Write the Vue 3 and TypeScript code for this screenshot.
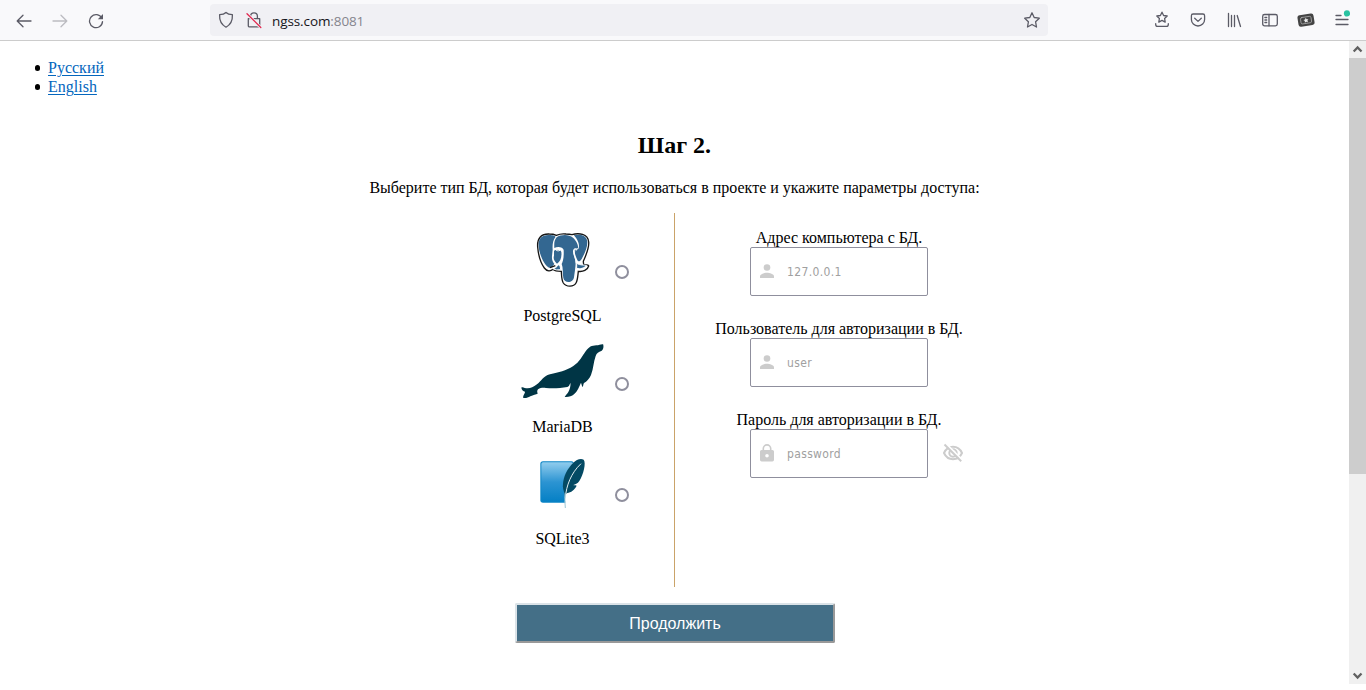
<script setup lang="ts">
import { ref } from 'vue'

interface Field {
  id: string
  label: string
  placeholder: string
  icon: 'user' | 'lock'
}

const fields: Field[] = [
  { id: 'host', label: 'Адрес компьютера с БД.', placeholder: '127.0.0.1', icon: 'user' },
  { id: 'login', label: 'Пользователь для авторизации в БД.', placeholder: 'user', icon: 'user' },
  { id: 'secret', label: 'Пароль для авторизации в БД.', placeholder: 'password', icon: 'lock' },
]
const databases = ['PostgreSQL', 'MariaDB', 'SQLite3']
const selected = ref('')
</script>

<template>
  <div class="window">
    <header class="toolbar">
      <div class="nav">
        <svg width="16" height="16" viewBox="0 0 16 16"><path d="M15 8H1.500M7 2.200 1.200 8 7 13.800" /></svg>
        <svg class="dim" width="16" height="16" viewBox="0 0 16 16"><path d="M1 8h13.500M9 2.200 14.800 8 9 13.800" /></svg>
        <svg width="16" height="16" viewBox="0 0 16 16"><path d="M13.800 5.200A6.500 6.500 0 1 0 14.500 8.600" /><path class="solid" d="M15 1v5.200H9.800z" /></svg>
      </div>
      <div class="address">
        <svg width="16" height="18" viewBox="0 0 16 18"><path d="M8 1.500C6.600 3 4 3.700 1.600 3.700c-.3 5.600 1.300 9.600 6.400 12.500 5.100-2.900 6.700-6.900 6.400-12.500C12 3.700 9.400 3 8 1.500z" /></svg>
        <svg class="insecure" width="16" height="18" viewBox="0 0 16 18"><path d="M4.600 7.500V5.200a3.400 3.400 0 0 1 6.800 0v2.300M2.300 7.700h11.400v7a1.200 1.200 0 0 1-1.200 1.200h-9a1.200 1.200 0 0 1-1.200-1.200z" /><path class="halo" d="M1.300 3.100 15 16.800" /><path class="strike" d="M1 2.700 14.800 16.500" /></svg>
        <span class="url">ngss.com<span>:8081</span></span>
        <svg class="star" width="18" height="18" viewBox="0 0 18 18"><path d="m9 1.800 2.200 4.700 5.100.7-3.700 3.600.9 5.200L9 13.500 4.500 16l.9-5.200-3.700-3.600 5.100-.7z" /></svg>
      </div>
      <div class="actions">
        <svg width="16" height="18" viewBox="0 0 16 18"><path d="m8 1.200 1.600 3.300 3.600.5-2.600 2.500.6 3.600L8 9.400l-3.200 1.700.6-3.600L2.800 5l3.600-.5zM1.700 12.700v.7c0 1.300.6 1.900 1.900 1.900h8.800c1.300 0 1.900-.6 1.900-1.900v-.7" /></svg>
        <svg width="16" height="18" viewBox="0 0 16 18"><path d="M3.100 3h9.800c1 0 1.700.7 1.700 1.700v3.700a6.600 6.600 0 0 1-13.200 0V4.700C1.400 3.700 2.100 3 3.100 3zM4.700 7.300 8 10.400l3.300-3.100" /></svg>
        <svg width="16" height="18" viewBox="0 0 16 18"><path d="M2.500 2.500v13M5.500 4.500v11M8.500 4.500v11M11.200 4.500l3.300 11" /></svg>
        <svg width="18" height="18" viewBox="0 0 18 18"><rect x="1.700" y="3.500" width="14.600" height="11.300" rx="1.800" /><path d="M8 3.500v11.300M3.900 6.500h1.800M3.900 9h1.800M3.900 11.500h1.800" /></svg>
        <svg class="ticket" width="18" height="18" viewBox="0 0 18 18"><g transform="rotate(-9 9 9)"><rect class="solid" x=".9" y="3.400" width="16.200" height="11.500" rx="2.500" /><rect x="3.700" y="5.900" width="10.600" height="6.500" rx="1.500" /><path class="spark" d="m9 6.800.8 1.500 1.700.3-1.200 1.200.3 1.700L9 10.700l-1.600.8.3-1.700-1.200-1.200 1.700-.3z" /></g></svg>
        <svg width="16" height="22" viewBox="0 0 16 22"><path d="M2 6.500h5M2 10.500h12M2 15.500h12" /><circle cx="13" cy="4.400" r="3.100" /></svg>
      </div>
    </header>

    <div class="viewport">
      <main>
        <ul>
          <li><a href="#">Русский</a></li>
          <li><a href="#">English</a></li>
        </ul>
        <h2>Шаг 2.</h2>
        <p>Выберите тип БД, которая будет использоваться в проекте и укажите параметры доступа:</p>

        <div class="columns">
          <section class="databases">
            <label v-for="(name, i) in databases" :key="name" class="database">
              <span class="brand">
                <svg v-if="i === 0" width="85" height="57" viewBox="30 37 255 171">
                  <path d="M83 82C81 55 94 42 118 43q12 0 21 4 14-6 29-4 10 0 18 2c20-6 48-3 50 22 2 18-6 35-16 58 0 5 1 8 1 10 7 0 14-1 15 4-3 12-17 18-31 16-2 17-2 27-7 35-7 13-30 12-38 0-6-10-5-23-6-35-11 0-20-1-25-6-7 6-18 7-26-4-13-18-18-40-20-63z" fill="#fff" stroke="#161616" stroke-width="4" />
                  <path d="M86 82c-2-24 8-37 32-36 12 0 15 3 19 5-9 11-10 24-9 39l-2 19c-1 11 2 18 7 24-5 7-11 15-18 10-15-11-27-42-29-61z" fill="#336791" />
                  <path d="M140 53c12-9 37-10 49 1 13 12 16 24 15 32-9-3-15 1-15 9 0 12 7 20 8 33 0 13-3 30-5 45-2 18-29 19-32 2-3-17 0-31-5-42 4-8 7-19 6-42-2-9-18-12-28-6-1-14 0-24 7-32z" fill="#336791" />
                  <path d="M191 47c22-6 41 1 41 21 0 18-9 35-17 50-5 8-11 9-13 3-4-9-8-17-8-28 0-7 5-8 11-5 6-12-3-31-14-41zM132 93c9-5 20-3 22 4 2 16-3 29-13 35-8-7-12-14-9-24z" fill="#336791" />
                  <path d="M192 92c-2 14 6 22 6 39M138 91q7-3 12 1l-6 2zM194 90l8-1-5 4" fill="none" stroke="#fff" stroke-width="2.500" stroke-linejoin="round" />
                  <path d="M128 147c6 0 11-4 18-12 5 3 5 8 6 15q-14 3-24-3z" fill="#336791" stroke="#fff" stroke-width="3" />
                  <path d="M200 131c11 7 22 4 29 6-6 9-19 12-29 9z" fill="#336791" stroke="#fff" stroke-width="3" />
                  <path d="m120 144 16-6" fill="none" stroke="#161616" stroke-width="3.500" />
                </svg>
                <svg v-else-if="i === 1" width="85" height="57" viewBox="30 26 255 171">
                  <path d="M279 27c-6-1-12 3-20 3-14 1-22 4-32 18-11 15-18 32-37 44-23 15-43 18-70 25-22 6-25 20-39 30-14 11-22 13-37 11-4-2-8-3-10-1 1 7 6 10 11 12 0 6-7 11-5 19 8 1 14-1 21-5 9-4 17-6 22-8-1-5-3-8 1-13 8-5 15-5 24-4 24 2 44 0 64-3 4-1 7-6 9-13 2 9-2 20-6 28-3 5-7 9-11 15 11 1 21-2 28-8 10-9 16-23 21-35l4 13c4-3 2-8 5-12 8-4 17-13 21-24 8-20 7-38 14-57 3-9 9-12 17-15 6-3 8-13 5-21z" fill="#003545" />
                </svg>
                <svg v-else width="85" height="57" viewBox="30 30 255 171">
                  <defs><linearGradient id="sky" x2="0" y2="1"><stop stop-color="#90cced" /><stop offset=".5" stop-color="#2c94d2" /><stop offset="1" stop-color="#0580c5" /></linearGradient></defs>
                  <rect x="91" y="49" width="101" height="124" rx="8" fill="#0b84c5" />
                  <rect x="94" y="52" width="95" height="118" rx="5" fill="url(#sky)" />
                  <path d="M166 174c-3-38-5-53 0-76 7-25 23-51 43-56h31v133z" fill="#fff" />
                  <path d="M221 44c-9-5-22 0-31 9-19 18-30 43-31 64-2 10 2 18 4 28l2 13c2-11 4-13 7-14 11-1 22-10 28-22-5-2-8 0-10-2 5-1 13-4 18-12 12-19 21-54 13-64z" fill="#044a64" />
                  <path d="M213 56c-30 28-44 66-47 102" fill="none" stroke="#e5f0f3" stroke-width="3" />
                  <path d="M166 145q-3 22 0 44" fill="none" stroke="#9ec6d4" stroke-width="3" />
                </svg>
                <span>{{ name }}</span>
              </span>
              <input v-model="selected" type="radio" name="database" :value="name">
            </label>
          </section>

          <section class="fields">
            <div v-for="field in fields" :key="field.id" class="field">
              <label :for="field.id">{{ field.label }}</label>
              <div class="entry">
                <div class="box">
                  <svg v-if="field.icon === 'user'" width="14" height="16" viewBox="0 0 14 16"><circle cx="7" cy="3.500" r="3.300" /><path d="M0 14v-1.700C0 10 4.500 8.800 7 8.800s7 1.200 7 3.500V14z" /></svg>
                  <svg v-else width="14" height="20" viewBox="0 0 14 20"><path fill-rule="evenodd" d="M2.500 6V4.600a4.500 4.500 0 0 1 9 0V6h.9A1.600 1.600 0 0 1 14 7.600v8.200a1.600 1.600 0 0 1-1.600 1.600H1.600A1.600 1.600 0 0 1 0 15.800V7.600A1.600 1.600 0 0 1 1.600 6zm1.600 0h5.800V4.600a2.900 2.900 0 0 0-5.800 0zM7 9.900a1.800 1.800 0 1 0 0 3.600 1.800 1.800 0 0 0 0-3.600z" /></svg>
                  <input :id="field.id" type="text" :placeholder="field.placeholder">
                </div>
                <svg v-if="field.icon === 'lock'" class="eye" width="20" height="20" viewBox="0 0 20 20"><path d="M1 10c2-4.400 5.200-6.200 9-6.200s7 1.800 9 6.200c-2 4.400-5.200 6.200-9 6.200S3 14.400 1 10z" /><circle cx="10" cy="10" r="3.700" /><path class="gap" d="M3.200 1 19 16.800" /><path d="M1.500 1.500 18.200 18.200" /></svg>
              </div>
            </div>
          </section>
        </div>
        <button type="button">Продолжить</button>
      </main>

      <div class="scrollbar">
        <svg width="17" height="17" viewBox="0 0 17 17"><path d="m4.700 10.500 3.900-4 3.900 4" /></svg>
        <div class="thumb"></div>
        <svg width="17" height="17" viewBox="0 0 17 17"><path d="m4.700 6.500 3.900 4 3.900-4" /></svg>
      </div>
    </div>
  </div>
</template>

<style>
body { overflow: hidden; background: #fff; }
</style>

<style scoped>
* { box-sizing: border-box; }
.window { width: 1366px; height: 690px; font: 16px/19px "Liberation Serif", serif; color: #000; }
svg { display: block; flex: none; }
.toolbar { display: flex; height: 41px; background: #f9f9fb; border-bottom: 1px solid #ccc; align-items: center; }
.toolbar svg { fill: none; stroke: #5b5b66; stroke-width: 1.300; stroke-linejoin: round; stroke-linecap: round; }
.toolbar .solid { fill: #5b5b66; stroke: none; }
.toolbar .dim { stroke: #bcbcc1; }
.nav { display: flex; gap: 20px; width: 210px; padding: 1px 0 0 16px; }
.address { display: flex; align-items: center; width: 838px; height: 32px; border-radius: 4px; padding: 0 7px 0 8px; background: #f0f0f4; }
.address .insecure { margin: 0 10px 0 12px; }
.toolbar .halo { stroke: #f0f0f4; stroke-width: 3; }
.toolbar .strike { stroke: #e22850; stroke-width: 1.300; }
.url { flex: 1; font: 13.500px/20px "Open Sans", "Noto Sans", sans-serif; color: #15141a; padding-top: 1px; letter-spacing: -.1px; }
.url span { color: #85858e; }
.actions { display: flex; align-items: center; gap: 20px; margin-left: 106px; }
.actions svg:nth-child(4), .actions svg:nth-child(5) { margin: 0 -1px; }
.toolbar .ticket .solid { fill: #444; }
.toolbar .ticket rect:not(.solid) { stroke: #aaa; stroke-width: .8; }
.toolbar .ticket .spark { fill: #eee; stroke: none; }
.actions circle { fill: #2ac3a2; stroke: none; }
.viewport { display: flex; height: 643px; }
main { width: 1349px; padding-top: 17px; }
ul { margin: 0; padding-left: 48px; list-style: none; }
li { display: flex; align-items: center; height: 19px; margin-left: -13.500px; }
li::before { content: ""; width: 5.500px; height: 5.500px; margin: 1px 8px 0 0; border-radius: 50%; background: #000; }
a { color: #0366bd; text-underline-offset: 2px; }
h2 { margin: 35px 0 0; font-size: 24px; line-height: 28px; text-align: center; }
p { margin: 19px 0 0; text-align: center; }
.columns { display: flex; height: 374px; margin-top: 16px; }
.databases { width: 675px; padding: 19px 45px 0 0; border-right: 1px solid #caa369; }
.database { display: flex; justify-content: flex-end; gap: 10px; height: 111.500px; }
.brand { display: flex; flex-direction: column; align-items: center; width: 85px; gap: 17px; }
.database:nth-child(2) .brand { gap: 16.500px; }
.database input { appearance: none; width: 14px; height: 14px; margin: 33px 0 0; border: 2px solid #8f8f9d; border-radius: 50%; background: #fff; }
.fields { width: 328px; padding-top: 15px; }
.field { height: 91px; text-align: center; }
.field label { display: block; height: 19px; }
.entry { display: flex; align-items: center; gap: 15px; padding-left: 75px; }
.box { display: flex; align-items: center; width: 178px; height: 49px; border: 1px solid #8f8f9d; border-radius: 2px; padding: 0 9px; gap: 13px; }
.box svg { fill: #ccc; }
.box input { min-width: 0; flex: 1; padding: 0; border: 0; outline: 0; font: 12px "DejaVu Sans Condensed", "DejaVu Sans", sans-serif; font-stretch: condensed; letter-spacing: .35px; }
.box input::placeholder { color: #a0a0a0; opacity: 1; }
.eye { margin-top: -2px; fill: none; stroke: #ccc; stroke-width: 2; }
.eye .gap { stroke: #fff; }
button { display: block; width: 320px; height: 40px; margin: 16px 0 0 515px; padding: 2px 0 0; border: 2px solid; border-color: #dbe3e8 #999 #999 #dbe3e8; border-radius: 2px; background: #446f87; color: #fff; font: 16px "Liberation Sans", sans-serif; }
.scrollbar { display: flex; flex-direction: column; width: 17px; background: #f0f0f0; }
.scrollbar svg { fill: none; stroke: #606060; stroke-width: 2.300; }
.thumb { height: 416px; margin-bottom: auto; background: #cdcdcd; }
</style>
